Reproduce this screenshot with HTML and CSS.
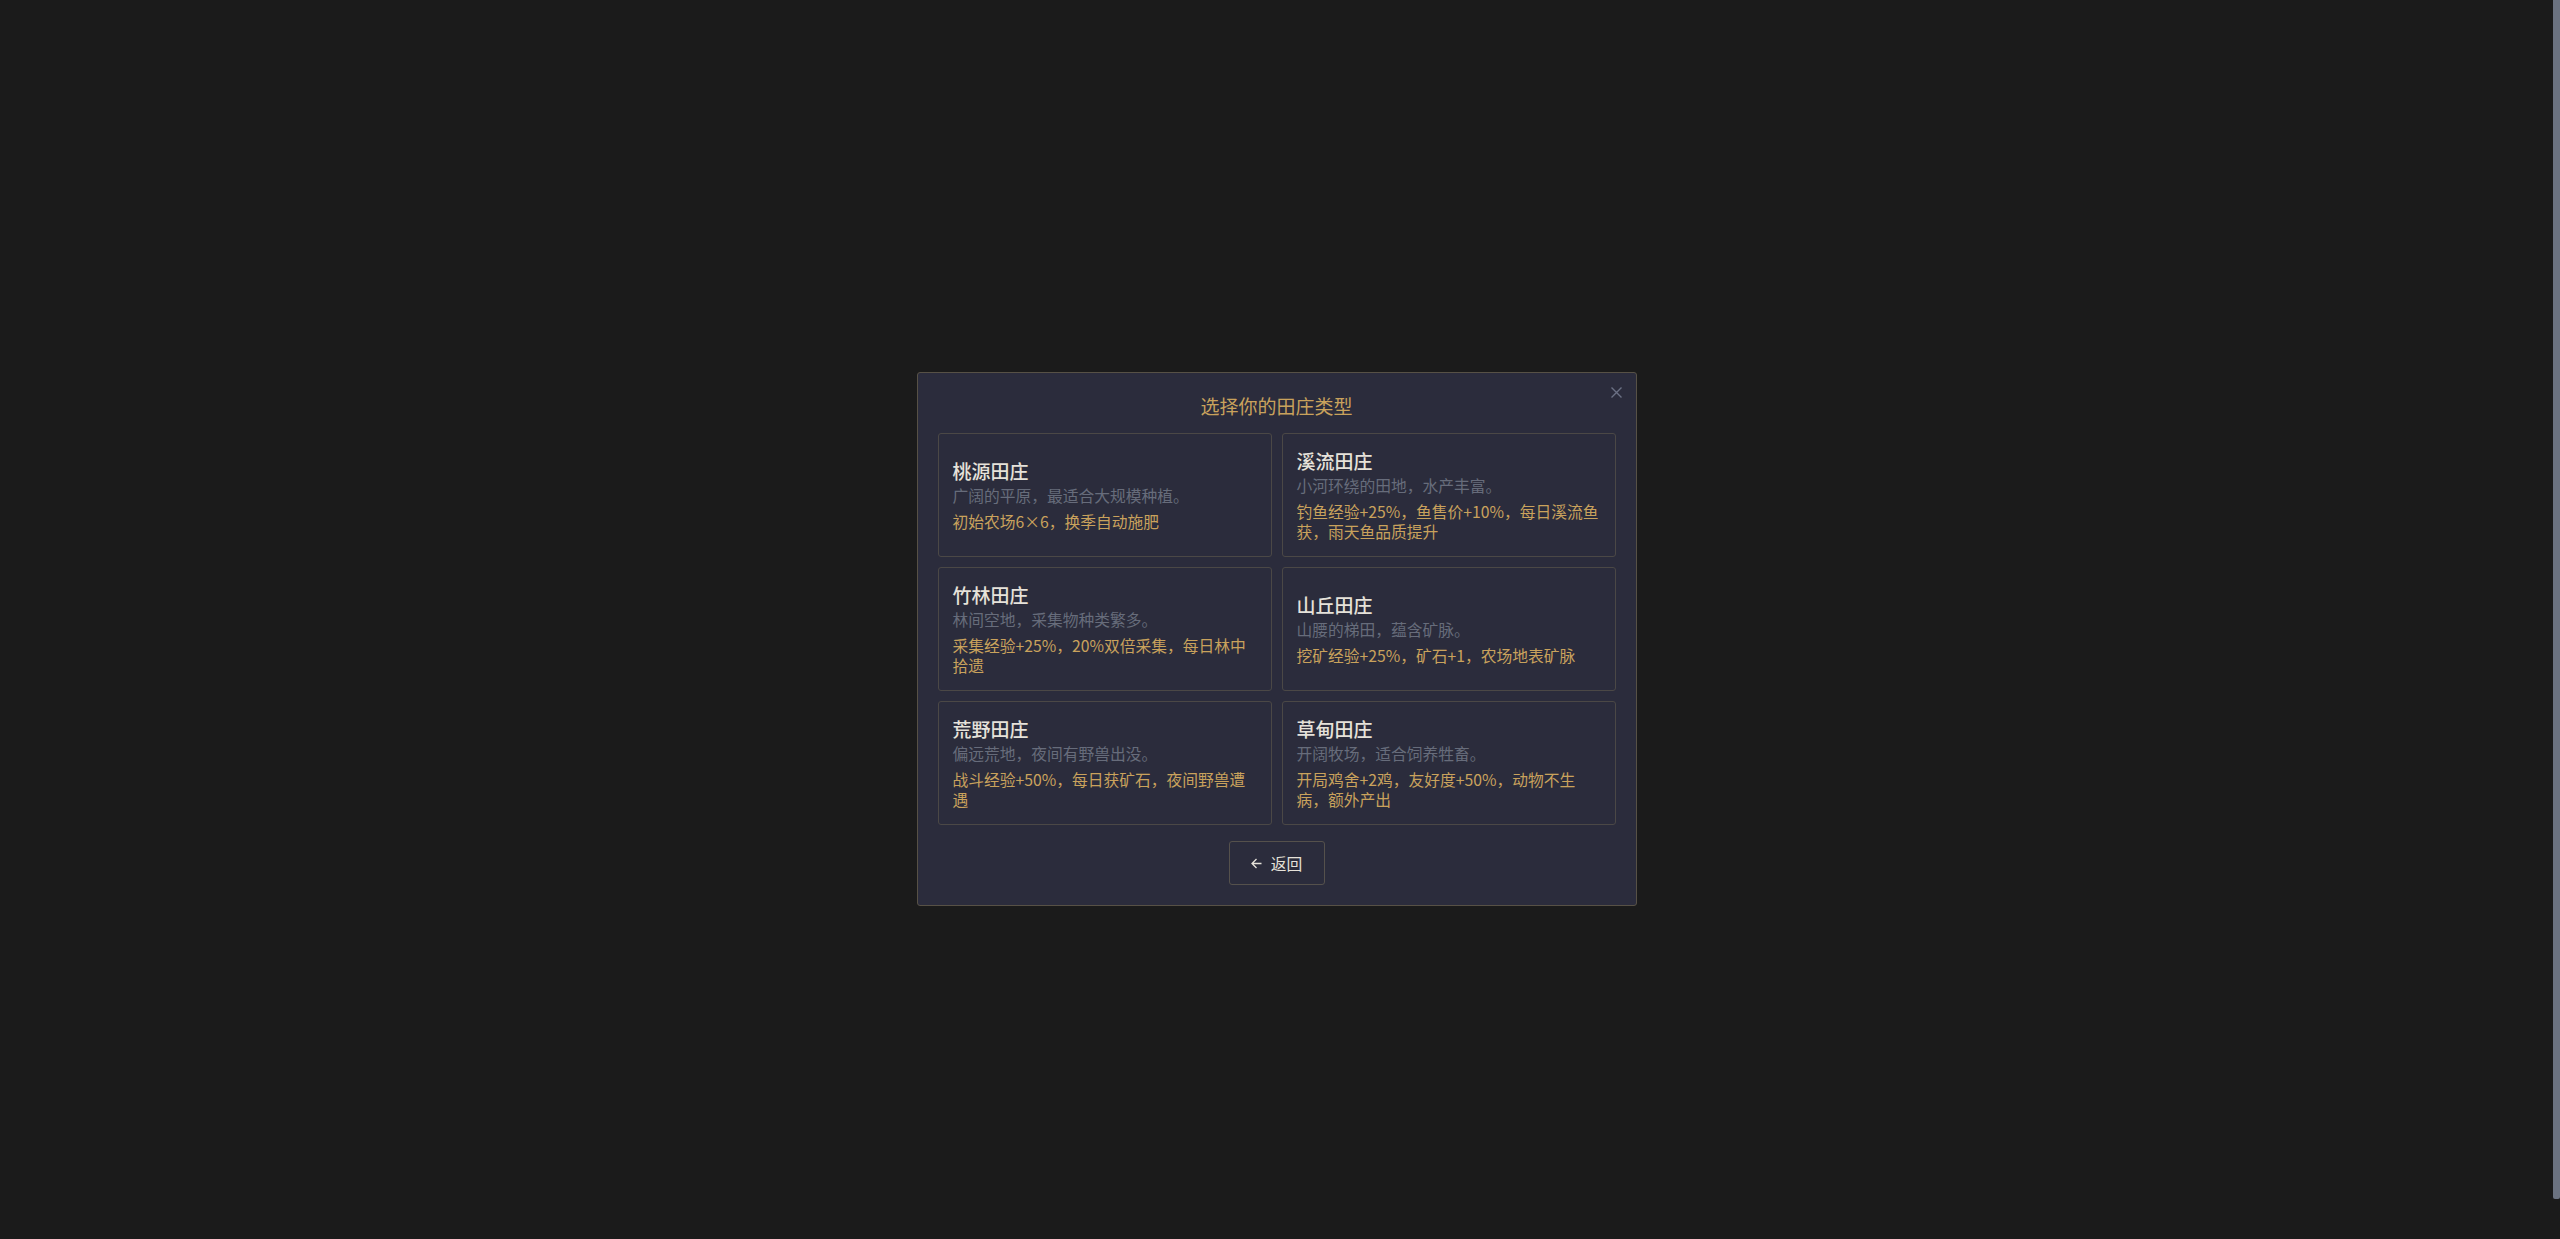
FILE: index.html
```html
<!DOCTYPE html>
<html lang="zh-CN">
  <head>
    <meta charset="UTF-8" />
    <meta name="viewport" content="width=device-width, initial-scale=1.0" />
    <title>选择田庄</title>
    <link rel="stylesheet" href="styles.css">
  </head>
  <body>
    <div class="screen">
      <section class="modal">
        <button class="close" aria-label="关闭">
          <svg width="11" height="11" viewBox="0 0 11 11">
            <path d="M0.5 0.5 L10.5 10.5 M10.5 0.5 L0.5 10.5" stroke="currentColor" stroke-width="1.4" fill="none" />
          </svg>
        </button>
        <h2 class="modal-title">选择你的田庄类型</h2>
        <div class="farm-grid">
          <div class="farm-card">
            <h3 class="farm-name">桃源田庄</h3>
            <p class="farm-desc">广阔的平原，最适合大规模种植。</p>
            <p class="farm-bonus">初始农场6×6，换季自动施肥</p>
          </div>
          <div class="farm-card">
            <h3 class="farm-name">溪流田庄</h3>
            <p class="farm-desc">小河环绕的田地，水产丰富。</p>
            <p class="farm-bonus">钓鱼经验+25%，鱼售价+10%，每日溪流鱼获，雨天鱼品质提升</p>
          </div>
          <div class="farm-card">
            <h3 class="farm-name">竹林田庄</h3>
            <p class="farm-desc">林间空地，采集物种类繁多。</p>
            <p class="farm-bonus">采集经验+25%，20%双倍采集，每日林中拾遗</p>
          </div>
          <div class="farm-card">
            <h3 class="farm-name">山丘田庄</h3>
            <p class="farm-desc">山腰的梯田，蕴含矿脉。</p>
            <p class="farm-bonus">挖矿经验+25%，矿石+1，农场地表矿脉</p>
          </div>
          <div class="farm-card">
            <h3 class="farm-name">荒野田庄</h3>
            <p class="farm-desc">偏远荒地，夜间有野兽出没。</p>
            <p class="farm-bonus">战斗经验+50%，每日获矿石，夜间野兽遭遇</p>
          </div>
          <div class="farm-card">
            <h3 class="farm-name">草甸田庄</h3>
            <p class="farm-desc">开阔牧场，适合饲养牲畜。</p>
            <p class="farm-bonus">开局鸡舍+2鸡，友好度+50%，动物不生病，额外产出</p>
          </div>
        </div>
        <div class="modal-foot">
          <button class="back-btn">
            <svg width="11" height="11" viewBox="0 0 11 11">
              <path d="M10.5 5.5 H1 M5.5 1 L1 5.5 L5.5 10" stroke="currentColor" stroke-width="1.3" fill="none" />
            </svg>
            <span>返回</span>
          </button>
        </div>
      </section>
    </div>
    <div class="scroll-thumb"></div>
  </body>
</html>
```

FILE: styles.css
```css
* {
  margin: 0;
  padding: 0;
  box-sizing: border-box;
  font-family: "Noto Sans CJK SC", "Noto Sans", sans-serif;
}

html {
  background-color: #1b1b1b;
}

body {
  background-color: #1b1b1b;
}

/* headless shots hide the real scrollbar, so draw its thumb */
.scroll-thumb {
  position: fixed;
  top: 0;
  right: 0;
  width: 7px;
  height: 1199px;
  background-color: #6b7280;
  border-radius: 0 0 2px 2px;
}

.screen {
  min-height: calc(100vh + 39px);
  padding-right: 7px;
  display: flex;
  justify-content: center;
  align-items: center;
}

.modal {
  position: relative;
  width: 720px;
  padding: 20px;
  background-color: #2b2c3c;
  border: 1px solid #575146;
  border-radius: 3px;
}

.close {
  position: absolute;
  top: 14px;
  right: 14px;
  width: 11px;
  height: 11px;
  display: flex;
  background: none;
  border: none;
  color: #6b7084;
  cursor: pointer;
}

.modal-title {
  text-align: center;
  font-size: 19px;
  line-height: 26px;
  font-weight: 400;
  color: #c9a25c;
  margin-bottom: 14px;
}

.farm-grid {
  display: grid;
  grid-template-columns: 1fr 1fr;
  gap: 10px;
}

.farm-card {
  min-height: 124px;
  display: flex;
  flex-direction: column;
  justify-content: center;
  padding: 14px;
  border: 1px solid #4b4846;
  border-radius: 3px;
  background-color: #2b2c3c;
  cursor: pointer;
}

.farm-name {
  font-size: 19px;
  line-height: 24px;
  font-weight: 500;
  color: #e6e2da;
}

.farm-desc {
  margin-top: 2px;
  font-size: 15.75px;
  line-height: 22px;
  color: #676c7b;
}

.farm-bonus {
  margin-top: 5px;
  font-size: 15.75px;
  line-height: 20px;
  color: #c9a25c;
}

.modal-foot {
  display: flex;
  justify-content: center;
  margin-top: 16px;
}

.back-btn {
  width: 96px;
  height: 44px;
  display: flex;
  justify-content: center;
  align-items: center;
  gap: 9px;
  background: none;
  border: 1px solid #55514c;
  border-radius: 3px;
  color: #e6e2da;
  font-size: 15.75px;
  cursor: pointer;
}
```
